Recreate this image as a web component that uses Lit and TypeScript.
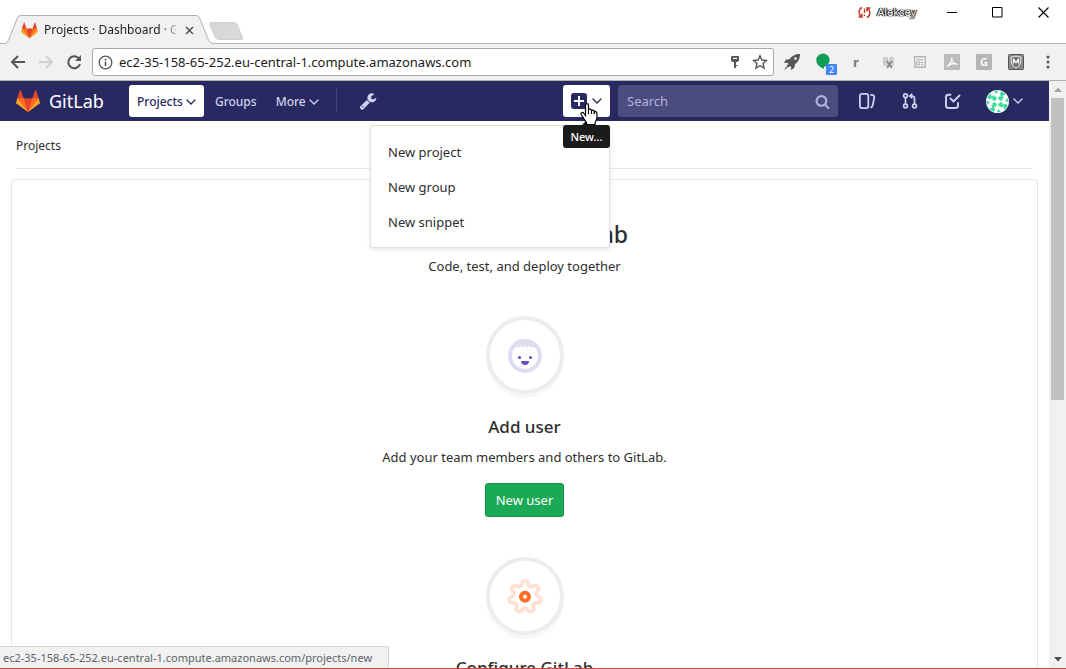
import { LitElement, html, css, svg } from "lit";
import { customElement } from "lit/decorators.js";

const chevron = html`<svg class="chev" viewBox="0 0 10 6" aria-hidden="true">
  <path d="M1 1l4 4 4-4" fill="none" stroke="currentColor" stroke-width="1.4" stroke-linecap="round" stroke-linejoin="round" />
</svg>`;

const tanuki = html`<svg class="tanuki" viewBox="0 0 36 36" aria-hidden="true">
  <path fill="#e24329" d="M2 14l9.380 9v-9l-4-12.280c-.205-.632-1.176-.632-1.380 0z" />
  <path fill="#e24329" d="M34 14l-9.380 9v-9l4-12.280c.205-.632 1.176-.632 1.380 0z" />
  <path fill="#e24329" d="M18 34.380L3 14h30z" />
  <path fill="#fc6d26" d="M18 34.380L11.380 14H2l4 11z" />
  <path fill="#fc6d26" d="M18 34.380L24.620 14H34l-4 11z" />
  <path fill="#fca326" d="M2 14L.1 20.160c-.180.565 0 1.200.500 1.560L18 34.380z" />
  <path fill="#fca326" d="M34 14l1.900 6.160c.180.565 0 1.200-.500 1.560L18 34.380z" />
</svg>`;

/* Closed outline of a rounded gear with the given number of teeth. */
const gearPath = (teeth: number, mid: number, depth: number) => {
  const points: string[] = [];
  for (let i = 0; i < 280; i++) {
    const a = (i / 280) * Math.PI * 2;
    const r = mid + depth * Math.tanh(1.8 * Math.cos(teeth * a));
    points.push(`${(20 + r * Math.sin(a)).toFixed(2)} ${(20 - r * Math.cos(a)).toFixed(2)}`);
  }
  return `M${points.join("L")}Z`;
};

@customElement("browser-chrome")
class BrowserChrome extends LitElement {
  static styles = css`
    :host { display: block; font-family: "Noto Sans", "Open Sans", sans-serif; }
    button { border: 0; padding: 0; margin: 0; background: none; font: inherit; color: inherit; display: flex; align-items: center; justify-content: center; }
    svg { display: block; }
    .strip { height: 43px; display: flex; align-items: flex-start; background: #fff; }
    .tab { position: relative; width: 208px; height: 28px; margin: 15px 0 0 5px; box-sizing: border-box; padding: 2px 17px 0 16px; display: flex; align-items: center; gap: 6px; }
    .shape { position: absolute; left: 0; top: 0; width: 208px; height: 29px; z-index: 0; }
    .tanuki { position: relative; width: 17px; height: 17px; flex: none; }
    .title { position: relative; flex: 1; overflow: hidden; white-space: nowrap; font-size: 12px; line-height: 16px; color: #222; mask-image: linear-gradient(90deg, #000 88%, transparent 104%); }
    .close { position: relative; width: 14px; height: 16px; }
    .newtab { margin: 22px 0 0 -4px; }
    .space { flex: 1; }
    .user { display: flex; align-items: center; gap: 6px; height: 24px; margin-right: 12px; font-size: 11px; color: #fff; text-shadow: 0 0 1px #000, 0 0 1px #000, 1px 0 1px #000, -1px 0 1px #000; }
    .win { width: 46px; height: 24px; }
    .bar { height: 38px; box-sizing: border-box; border-top: 1px solid #b4b4b4; border-bottom: 1px solid #b0b0b0; background: #f1f1f1; display: flex; align-items: center; padding: 0 2px 0 4px; }
    .nav { width: 28px; height: 28px; }
    .omni { flex: 1; min-width: 0; height: 28px; box-sizing: border-box; margin: 0 2px 0 4px; padding: 0 5px; border: 1px solid #a9a9a9; border-radius: 3px; background: #fff; display: flex; align-items: center; gap: 6px; }
    .url { flex: 1; min-width: 0; border: 0; outline: 0; padding: 0; background: none; font: 13px/20px "Noto Sans", "Open Sans", sans-serif; color: #1b1b1b; }
    .pin { margin-right: 6px; }
    .ext { width: 32px; height: 28px; }
    .letter { font-size: 13px; font-weight: 700; color: #777; }
  `;
  render() {
    return html`
      <div class="strip">
        <div class="tab">
          <svg class="shape" viewBox="0 0 208 29" aria-hidden="true">
            <path d="M0 29L.500 28.500C2 28 3 26 4 24L12 4C13 1.500 14 .500 16 .500H191C193 .500 194 1.500 195 4L203 24C204 26 205 28 207.500 28.500V29Z" fill="#f1f1f1" />
            <path d="M0 28.500C2 28 3 26 4 24L12 4C13 1.500 14 .500 16 .500H191C193 .500 194 1.500 195 4L203 24C204 26 205 28 208 28.500" fill="none" stroke="#b0b0b0" />
          </svg>
          ${tanuki}
          <span class="title">Projects · Dashboard · GitLab</span>
          <button class="close" aria-label="Close tab"><svg width="9" height="9" viewBox="0 0 9 9"><path d="M1 1l7 7M8 1l-7 7" stroke="#555" stroke-width="1.600" /></svg></button>
        </div>
        <button class="newtab" aria-label="New tab"><svg width="34" height="18" viewBox="0 0 34 18"><path d="M2 .500H25Q27 .500 28 2.500L33.500 15.500Q34 17.500 32 17.500H9.500Q7.500 17.500 6.500 15.500L.800 2.500Q0 .500 2 .500Z" fill="#d8d8d8" stroke="#cecece" /></svg></button>
        <span class="space"></span>
        <span class="user">
          <svg width="13" height="13" viewBox="0 0 13 13" aria-hidden="true"><path d="M4 1.500C.500 3 .200 8 3 10.500M9 11.500C12.500 10 12.800 5 10 2.500M.500 11H4V7.500M12.500 2H9V5.500" fill="none" stroke="#c8382b" stroke-width="1.500" /><path d="M6.500 2.500v4.500M6.500 8.500v1.500" stroke="#c8382b" stroke-width="1.400" /></svg>
          Aleksey
        </span>
        <button class="win" aria-label="Minimize"><svg width="11" height="11" viewBox="0 0 11 11"><path d="M1 5.500H11" stroke="#000" /></svg></button>
        <button class="win" aria-label="Maximize"><svg width="11" height="11" viewBox="0 0 11 11"><path d="M.500.500h9.500v9.500H.500z" fill="none" stroke="#000" /></svg></button>
        <button class="win" aria-label="Close"><svg width="11" height="11" viewBox="0 0 11 11"><path d="M.500.500l10 10M10.500.500l-10 10" stroke="#000" stroke-width="1.100" /></svg></button>
      </div>
      <div class="bar">
        <button class="nav" aria-label="Back"><svg width="16" height="16" viewBox="0 0 16 16"><path d="M15 8H2M8 2L2 8l6 6" fill="none" stroke="#555" stroke-width="2" /></svg></button>
        <button class="nav" aria-label="Forward"><svg width="16" height="16" viewBox="0 0 16 16"><path d="M1 8h13M8 2l6 6-6 6" fill="none" stroke="#d0d0d0" stroke-width="2" /></svg></button>
        <button class="nav" aria-label="Reload"><svg width="16" height="16" viewBox="0 0 16 16"><path d="M13 4.500A6 6 0 1 0 14 10" fill="none" stroke="#555" stroke-width="2" /><path d="M15 1v6H9z" fill="#555" /></svg></button>
        <div class="omni">
          <svg width="15" height="15" viewBox="0 0 15 15" aria-hidden="true"><circle cx="7.500" cy="7.500" r="6.300" fill="none" stroke="#555" stroke-width="1.300" /><path d="M7.500 6.500V11M7.500 3.800v1.600" stroke="#555" stroke-width="1.600" /></svg>
          <input class="url" aria-label="Address" value="ec2-35-158-65-252.eu-central-1.compute.amazonaws.com" />
          <button class="pin" aria-label="Saved password"><svg width="10" height="14" viewBox="0 0 10 14"><path fill-rule="evenodd" d="M2 1h6q1 0 1 1v3q0 2-2 2H6v6H4V7H3Q1 7 1 5V2q0-1 1-1zM3 2.800v1.200h4V2.800z" fill="#555" /><path d="M5 10.500h2.500" stroke="#555" /></svg></button>
          <button aria-label="Bookmark"><svg width="16" height="16" viewBox="0 0 16 16"><path d="M8 1.800l1.900 4.200 4.500.500-3.400 3 1 4.500L8 11.700 4 14l1-4.500-3.400-3 4.500-.500z" fill="none" stroke="#555" stroke-width="1.400" /></svg></button>
        </div>
        <button class="ext" aria-label="Rocket"><svg width="16" height="16" viewBox="0 0 16 16"><path fill-rule="evenodd" d="M16 0C11 0 8 2 5.500 5.300L2 5.500 0 9l3.500-.300 1 1.300L2.500 12 4 13.500l2-1.500 1.200 1-.200 3 3.300-2 .500-3.500C14 8 16 5 16 0zM11.500 3.200a1.400 1.400 0 1 1 0 2.800 1.400 1.400 0 0 1 0-2.800zM2.500 12.500L0 16l3.500-2.300z" fill="#555" /></svg></button>
        <button class="ext" aria-label="Hangouts, 2 messages"><svg width="26" height="26" viewBox="0 0 26 26"><path d="M12 4.500a6.700 6.700 0 0 1 1 13.300V20Q5.300 17 5.300 11.200A6.700 6.700 0 0 1 12 4.500z" fill="#0f9d58" /><rect x="15" y="15" width="11" height="11" rx="1" fill="#4285f4" /><text x="20.500" y="24" font-size="9" text-anchor="middle" fill="#fff" font-family="Noto Sans">2</text></svg></button>
        <button class="ext letter">r</button>
        <button class="ext" aria-label="Extension"><svg width="13" height="13" viewBox="0 0 13 13"><path d="M1 1h5v9H3q-2 0-2-2zM7 1h5v9H7z" fill="#cfcfcf" /><path d="M5 5l5 7M10 5l-5 7" stroke="#888" stroke-width="1.800" /></svg></button>
        <button class="ext" aria-label="News"><svg width="12" height="12" viewBox="0 0 12 12"><path d="M.700.700h10.600v10.600H.700z" fill="none" stroke="#b6b6b6" stroke-width="1.400" /><path d="M3 3.700h6M2.500 6h3v3h-3zM7 6.500h2.500M7 8.700h2.500" fill="none" stroke="#b6b6b6" stroke-width="1.200" /></svg></button>
        <button class="ext" aria-label="PDF"><svg width="16" height="16" viewBox="0 0 16 16"><path d="M0 0h16v16H0z" fill="#bbb" /><path d="M3 12.500C6 10.500 8 7 7.700 3.500 7.700 7 10 10 13.500 10.500 10 9 6 10 3 12.500z" fill="none" stroke="#fff" stroke-width="1.200" /></svg></button>
        <button class="ext" aria-label="Translate"><svg width="16" height="16" viewBox="0 0 16 16"><rect width="16" height="16" rx="1" fill="#b5b5b5" /><text x="8" y="12" font-size="11" font-weight="600" text-anchor="middle" fill="#fff" font-family="Noto Sans">G</text></svg></button>
        <button class="ext" aria-label="Shield"><svg width="16" height="16" viewBox="0 0 16 16"><rect x=".500" y=".500" width="15" height="15" rx="1" fill="#888" stroke="#555" /><path d="M3 3q3 0 5-1 2 1 5 1c0 6-1 9-5 11C4 12 3 9 3 3z" fill="#777" stroke="#eee" /><path d="M5.500 9.500v-4L8 8.500l2.500-3v4" fill="none" stroke="#fff" stroke-width="1.300" /></svg></button>
        <button class="ext" aria-label="Menu"><svg width="4" height="14" viewBox="0 0 4 14"><g fill="#555"><circle cx="2" cy="2" r="1.500" /><circle cx="2" cy="7" r="1.500" /><circle cx="2" cy="12" r="1.500" /></g></svg></button>
      </div>
    `;
  }
}

@customElement("gitlab-navbar")
class GitlabNavbar extends LitElement {
  static styles = css`
    :host { display: block; font-family: "Noto Sans", "Open Sans", sans-serif; }
    svg { display: block; }
    a { color: inherit; text-decoration: none; }
    button { border: 0; margin: 0; background: none; font: inherit; color: inherit; }
    .bar { height: 40px; box-sizing: border-box; background: #292961; color: #d1d1f0; padding: 0 26px 0 16px; display: flex; align-items: center; font-size: 12px; line-height: 20px; font-weight: 500; }
    .brand { display: flex; align-items: center; gap: 9px; color: #fff; font-size: 18px; font-weight: 400; width: 113px; }
    .tanuki { width: 24px; height: 24px; }
    .chev { width: 10px; height: 6px; flex: none; }
    .item { height: 32px; padding: 2px 8px 0; box-sizing: border-box; border-radius: 3px; display: flex; align-items: center; gap: 3px; margin-right: 3px; }
    .on { background: #fff; color: #292961; }
    .rule { width: 1px; height: 24px; background: #45457c; margin: 0 22px 0 6px; }
    .space { flex: 1; }
    .create { position: relative; margin-right: 8px; }
    .plus { width: 47px; height: 32px; padding: 0 8px; border-radius: 3px; background: #fff; color: #292961; display: flex; align-items: center; gap: 5px; }
    .menu { position: absolute; right: 0; top: 40px; z-index: 2; width: 240px; box-sizing: border-box; margin: 0; padding: 9px 0 7px; list-style: none; background: #fff; border: 1px solid #e1e1e1; border-radius: 3px; box-shadow: 0 2px 4px rgba(0, 0, 0, 0.1); color: #2e2e2e; font-size: 13px; font-weight: 400; }
    .menu a { display: block; padding: 7px 17px 8px; }
    .tip { position: absolute; right: 0; top: 40px; z-index: 3; width: 47px; height: 23px; border-radius: 3px; background: #1b1b1b; color: #fff; font-size: 11px; line-height: 23px; text-align: center; }
    .tip::before { content: ""; position: absolute; left: 19px; top: -5px; border: 5px solid transparent; border-top: 0; border-bottom-color: #1b1b1b; }
    .hand { position: absolute; left: 17px; top: 18px; z-index: 4; }
    .search { width: 220px; height: 32px; box-sizing: border-box; border-radius: 3px; background: #4b4b7d; display: flex; align-items: center; padding: 0 8px 0 9px; color: #b0b0dc; margin-right: 19px; }
    .search input { flex: 1; min-width: 0; border: 0; outline: 0; padding: 0; background: none; color: #fff; font: 13px/20px "Noto Sans", "Open Sans", sans-serif; }
    .search input::placeholder { color: #b4b4de; opacity: 1; }
    .icons { display: flex; align-items: center; gap: 23px; }
    .me { display: flex; align-items: center; gap: 4px; padding: 0; }
  `;
  render() {
    return html`
      <header class="bar">
        <a class="brand" href="#">${tanuki}<span>GitLab</span></a>
        <button class="item on">Projects ${chevron}</button>
        <a class="item" href="#">Groups</a>
        <button class="item">More ${chevron}</button>
        <span class="rule"></span>
        <a href="#" aria-label="Admin area"><svg width="18" height="18" viewBox="0 0 1792 1792"><path fill="currentColor" d="M448 1472q0-26-19-45t-45-19-45 19-19 45 19 45 45 19 45-19 19-45zm644-420l-682 682q-37 37-90 37-52 0-91-37l-106-108q-38-36-38-90 0-53 38-91l681-681q39 98 114.500 173.500t173.500 114.500zm634-435q0 39-23 106-47 134-164.500 217.500t-258.500 83.500q-185 0-316.500-131.500t-131.500-316.500 131.500-316.500 316.500-131.500q58 0 121.500 16.500t107.500 46.500q16 11 16 28t-16 28l-293 169v224l193 107q5-3 79-48.500t135.500-81 70.500-35.500q15 0 23.500 10t8.500 25z" /></svg></a>
        <span class="space"></span>
        <div class="create">
          <button class="plus" aria-label="New" aria-expanded="true">
            <svg width="16" height="16" viewBox="0 0 16 16"><rect width="16" height="16" rx="3" fill="#292961" /><path d="M8 3v10M3 8h10" stroke="#fff" stroke-width="2" /></svg>
            ${chevron}
          </button>
          <ul class="menu">
            <li><a href="#">New project</a></li>
            <li><a href="#">New group</a></li>
            <li><a href="#">New snippet</a></li>
          </ul>
          <div class="tip" role="tooltip">New...</div>
          <svg class="hand" width="18" height="22" viewBox="0 0 18 22" aria-hidden="true"><path d="M5.500 12.500V2.500Q5.500.700 7 .700T8.500 2.500V7Q9 5.500 10.300 6 11.500 6.300 11.500 8 12 6.700 13.200 7.200 14.300 7.500 14.300 9 15 8 16 8.700 17 9.300 17 11V14Q17 16 16 17.500 15 19 15 21.500H6.500V19.500Q5 18 3.500 15L1.300 11.800Q.500 10 1.800 9.500 3 9 4 10.500Z" fill="#fff" stroke="#000" stroke-width="1.200" /><path d="M8.500 6.500V11M11.500 8V11M14.300 9V11" stroke="#000" stroke-width="1.100" /></svg>
        </div>
        <label class="search">
          <input type="text" placeholder="Search" aria-label="Search" />
          <svg width="15" height="15" viewBox="0 0 1792 1792"><path fill="currentColor" d="M1216 832q0-185-131.500-316.500t-316.500-131.500-316.500 131.500-131.500 316.500 131.500 316.500 316.500 131.500 316.500-131.500 131.500-316.500zm512 832q0 52-38 90t-90 38q-54 0-90-38l-343-342q-179 124-399 124-143 0-273.500-55.500t-225-150-150-225-55.500-273.500 55.500-273.500 150-225 225-150 273.500-55.500 273.500 55.500 225 150 150 225 55.500 273.500q0 220-124 399l343 343q37 37 37 90z" /></svg>
        </label>
        <nav class="icons">
          <a href="#" aria-label="Issues"><svg width="20" height="18" viewBox="0 0 20 18"><g fill="none" stroke="currentColor" stroke-width="1.800" stroke-linecap="round"><rect x="2.900" y="1.900" width="8.400" height="14.200" rx="2" /><path d="M14 2.800q3.500.300 3.300 2.500L15.700 13.500q-.500 1.600-1.700 1.800" /></g></svg></a>
          <a href="#" aria-label="Merge requests"><svg width="20" height="18" viewBox="0 0 20 18"><g fill="none" stroke="currentColor" stroke-width="1.700"><circle cx="5.500" cy="3.800" r="1.900" /><circle cx="5.500" cy="14" r="1.900" /><circle cx="14.500" cy="14" r="1.900" /><path d="M5.500 5.700v6.400M14.500 12V6.500Q14.500 4 12 4H11" /></g><path d="M8.500 4L12.300.800v6.400z" fill="currentColor" /></svg></a>
          <a href="#" aria-label="Todos"><svg width="20" height="18" viewBox="0 0 20 18"><path d="M7.500 2.800H5.500Q3 2.800 3 5.300V13.500Q3 16 5.500 16H12.500Q15 16 15 13.500V11" fill="none" stroke="currentColor" stroke-width="1.900" stroke-linecap="round" /><path d="M7.500 6.500L10.500 9.500L16.500 3.500" fill="none" stroke="currentColor" stroke-width="1.900" stroke-linecap="round" stroke-linejoin="round" /></svg></a>
          <button class="me" aria-label="Profile">
            <svg width="23" height="23" viewBox="-11.500 -11.500 23 23">
              <circle r="11.500" fill="#fff" />
              ${[0, 90, 180, 270].map(
                (a) => svg`<g transform="rotate(${a})" fill="#3ddc9c">
                  <path d="M.600 2.800L2.800.600L5 1.200V4L4 5L1.200 5Z" />
                  <path d="M-10.500 -4L-7 -8.500L-6 -5L-3 -6.500L-4 -3.500L-8 -2.500ZM-3.500 -10.500L1 -11L-1 -7.500ZM2 -8.500L5.500 -9L4 -6Z" />
                </g>`
              )}
            </svg>
            ${chevron}
          </button>
        </nav>
      </header>
    `;
  }
}

@customElement("app-root")
class AppRoot extends LitElement {
  static styles = css`
    :host { position: relative; height: 100vh; box-sizing: border-box; border-bottom: 1px solid #d0453e; display: flex; flex-direction: column; overflow: hidden; background: #fff; font-family: "Noto Sans", "Open Sans", sans-serif; font-size: 13px; line-height: 20px; color: #2e2e2e; }
    svg { display: block; }
    .body { flex: 1; min-height: 0; display: flex; }
    .view { flex: 1; min-width: 0; overflow: hidden; }
    main { padding: 0 11px; }
    .crumbs { margin: 0 5px 10px; height: 48px; box-sizing: border-box; padding-top: 2px; border-bottom: 1px solid #e5e5e5; display: flex; align-items: center; font-size: 12px; }
    .crumbs a { color: inherit; text-decoration: none; }
    .panel { border: 1px solid #e5e5e5; border-radius: 4px; padding-top: 38px; text-align: center; }
    h1, h2, p { margin: 0; }
    h1 { font-size: 23px; line-height: 32px; font-weight: 500; }
    .lead { margin: 6px 0 40px; }
    .card { display: flex; flex-direction: column; align-items: center; height: 241px; }
    .disc { width: 78px; height: 78px; box-sizing: border-box; border: 4px solid #ededed; border-radius: 50%; box-shadow: 0 4px 0 #f8f8f8; display: flex; align-items: center; justify-content: center; }
    h2 { margin: 21px 0 8px; font-size: 17px; line-height: 24px; font-weight: 500; }
    .btn { margin-top: 16px; height: 34px; padding: 0 10px; border: 1px solid #168f48; border-radius: 3px; background: #1aaa55; color: #fff; font: inherit; }
    .scroll { width: 17px; box-sizing: border-box; padding: 6px 2px 6px; background: #f1f1f1; display: flex; flex-direction: column; align-items: center; }
    .thumb { width: 13px; height: 302px; margin-top: 6px; background: #c1c1c1; }
    .fill { flex: 1; }
    .status { position: absolute; left: 0; bottom: 0; height: 22px; box-sizing: border-box; padding: 0 16px 0 3px; border: 1px solid #d5d5d5; border-width: 1px 1px 0 0; border-radius: 0 3px 0 0; background: #f1f1f1; color: #5f6368; font-size: 11px; line-height: 21px; }
  `;
  render() {
    return html`
      <browser-chrome></browser-chrome>
      <div class="body">
        <div class="view">
          <gitlab-navbar></gitlab-navbar>
          <main>
            <div class="crumbs"><a href="#">Projects</a></div>
            <section class="panel">
              <h1>Welcome to GitLab</h1>
              <p class="lead">Code, test, and deploy together</p>
              <div class="card">
                <div class="disc">
                  <svg width="40" height="40" viewBox="0 0 40 40" aria-hidden="true">
                    <circle cx="20" cy="20.800" r="15" fill="none" stroke="#e1dbf1" stroke-width="4" />
                    <path d="M10 13V9L20 5L30 9V13L27.500 11.500L26 13L24 10.500L22 13L20 10.500L18 13L16 10.500L14 13L12.500 11.500Z" fill="#e1dbf1" />
                    <circle cx="14.500" cy="22.500" r="1.600" fill="#6b4fbb" /><circle cx="25.500" cy="22.500" r="1.600" fill="#6b4fbb" />
                    <path d="M16 26h8a4 4 0 0 1-8 0z" fill="#6b4fbb" />
                  </svg>
                </div>
                <h2>Add user</h2>
                <p>Add your team members and others to GitLab.</p>
                <button class="btn">New user</button>
              </div>
              <div class="card">
                <div class="disc">
                  <svg width="40" height="40" viewBox="0 0 40 40" aria-hidden="true">
                    <path d=${gearPath(7, 13.8, 2.3)} transform="translate(0 .800)" fill="none" stroke="#fee1d3" stroke-width="3.800" stroke-linejoin="round" />
                    <circle cx="20" cy="20.800" r="4" fill="none" stroke="#fc6d26" stroke-width="4" />
                  </svg>
                </div>
                <h2>Configure GitLab</h2>
                <p>Make adjustments to how your GitLab instance is set up.</p>
              </div>
            </section>
          </main>
        </div>
        <div class="scroll" aria-hidden="true">
          <svg width="8" height="5" viewBox="0 0 8 5"><path d="M0 5l4-4.500L8 5z" fill="#a3a3a3" /></svg>
          <div class="thumb"></div>
          <div class="fill"></div>
          <svg width="8" height="5" viewBox="0 0 8 5"><path d="M0 0l4 4.500L8 0z" fill="#505050" /></svg>
        </div>
      </div>
      <div class="status">ec2-35-158-65-252.eu-central-1.compute.amazonaws.com/projects/new</div>
    `;
  }
}
